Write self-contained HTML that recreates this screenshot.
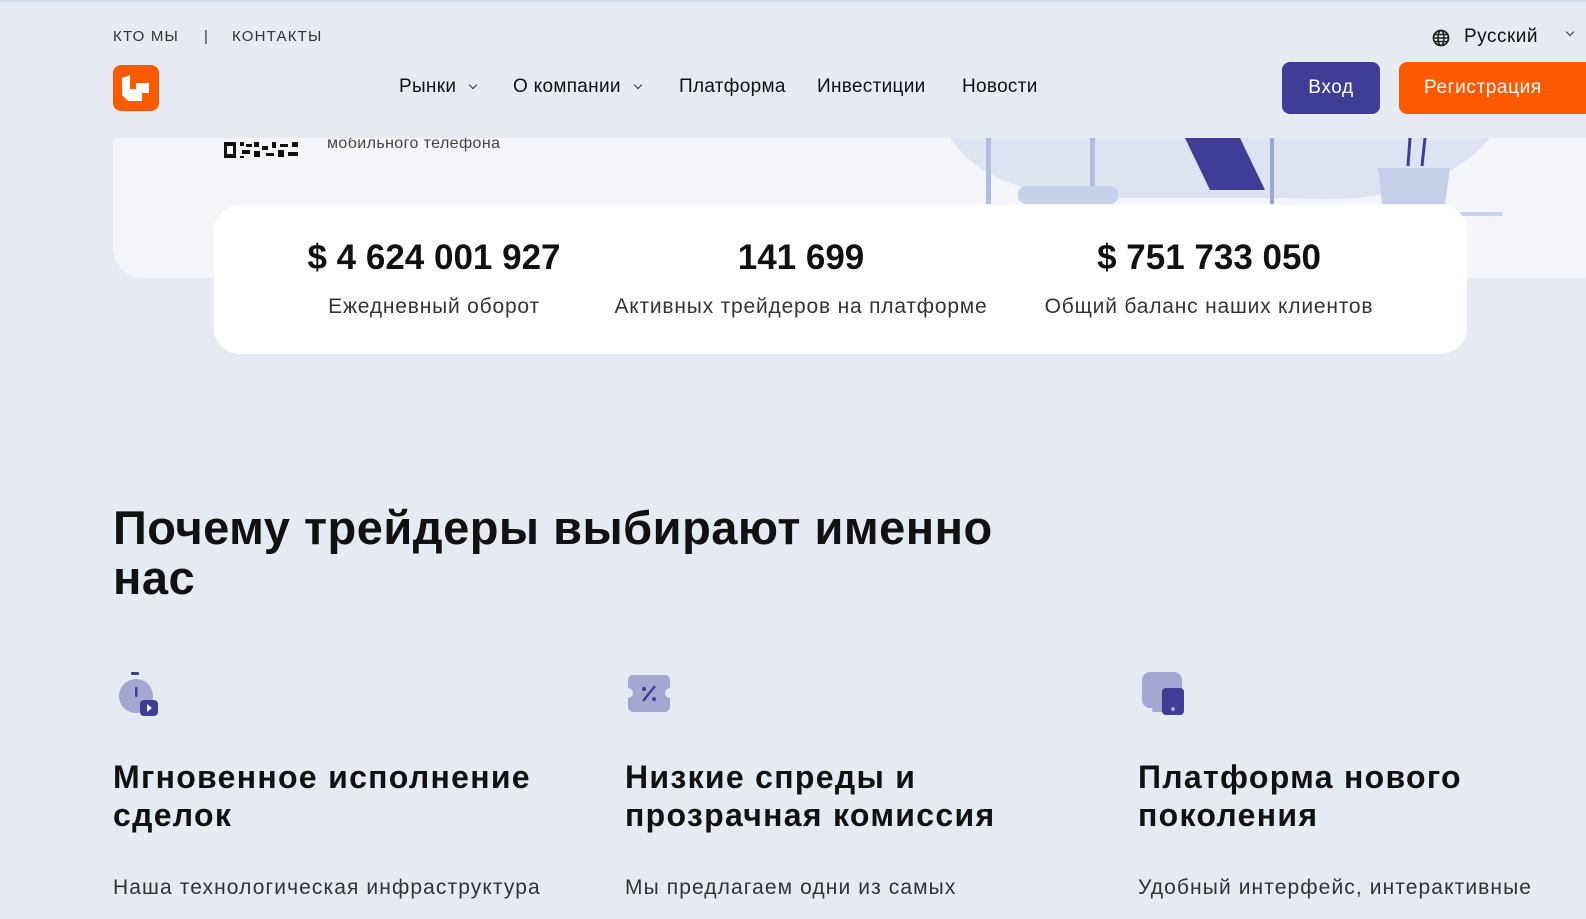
<!DOCTYPE html>
<html><head><meta charset="utf-8"><style>
*{margin:0;padding:0;box-sizing:border-box}
body{width:1586px;height:919px;overflow:hidden;background:#e5eaf3;font-family:"Liberation Sans",sans-serif;color:#111;position:relative}
.abs{position:absolute}
.hero{left:113px;top:60px;width:1500px;height:218px;background:#f3f5fa;border-radius:0 0 30px 30px}
.hdr{left:0;top:0;width:1586px;height:138px;background:#e5eaf3;border-top:2px solid #d6deec}
.top{top:28px;font-size:15px;letter-spacing:1.2px;color:#333}
.nav{top:76px;font-size:19px;color:#111;letter-spacing:0.3px}
.chev{display:inline-block;width:6px;height:6px;border-right:1.5px solid #333;border-bottom:1.5px solid #333;transform:rotate(45deg);margin-left:14px;position:relative;top:-4px}
.btn{top:62px;height:52px;border-radius:8px;color:#fff;font-size:19px;display:flex;align-items:center;justify-content:center;letter-spacing:0.6px}
.stats{left:214px;top:205px;width:1253px;height:149px;background:#fff;border-radius:26px}
.num{top:238px;font-size:35px;font-weight:bold;text-align:center}
.lab{top:295px;font-size:21px;color:#333;text-align:center;letter-spacing:0.8px}
h1{position:absolute;left:113px;top:503px;font-size:47px;line-height:50px;font-weight:bold;color:#111;letter-spacing:0.5px}
h3{position:absolute;top:758px;font-size:32px;line-height:38px;font-weight:bold;color:#111;letter-spacing:1.3px}
.p{top:876px;font-size:21px;color:#333;letter-spacing:1.1px}
</style></head><body>
<div class="abs hero"></div>
<svg class="abs" style="left:930px;top:138px" width="600" height="80">
<path d="M20 0 Q60 60 180 60 L360 60 Q500 70 560 0Z" fill="#dde3f1"/>
<rect x="56" y="0" width="5" height="66" fill="#b3bde0"/>
<rect x="160" y="0" width="5" height="66" fill="#b3bde0"/>
<rect x="88" y="48" width="100" height="18" rx="8" fill="#c7d2ea"/>
<path d="M255 0 L280 52 L335 52 L310 0Z" fill="#3f3d95"/>
<rect x="340" y="0" width="4" height="66" fill="#9ea8cc"/>
<path d="M448 30 L520 30 L515 66 L452 66Z" fill="#c6cfea"/>
<path d="M480 0 L478 28 M495 0 L492 28" stroke="#3f3d95" stroke-width="3"/>
<rect x="530" y="74" width="42" height="4" fill="#c7d2ea"/>
</svg>
<svg class="abs" style="left:222px;top:136px" width="80" height="24">
<rect x="0" y="0" width="80" height="24" fill="#f3f5fa"/>
<rect x="2" y="6" width="12" height="16" fill="#111"/><rect x="5" y="10" width="6" height="8" fill="#fff"/>
<path d="M18 6h4v4h-4zM24 8h6v3h-6zM32 6h5v5h-5zM40 10h6v4h-6zM50 6h4v6h-4zM58 8h8v3h-8zM70 6h6v5h-6zM20 14h8v4h-8zM32 15h6v6h-6zM44 17h8v3h-8zM56 14h6v7h-6zM66 16h10v4h-10zM18 20h4v2h-4z" fill="#111"/>
</svg>
<div class="abs" style="left:327px;top:135px;font-size:16px;color:#444;letter-spacing:0.4px">мобильного телефона</div>
<div class="abs hdr"></div>
<div class="abs top" style="left:113px">КТО МЫ</div>
<div class="abs top" style="left:204px">|</div>
<div class="abs top" style="left:232px">КОНТАКТЫ</div>
<svg class="abs" style="left:1432px;top:29px" width="18" height="18" viewBox="0 0 18 18"><circle cx="9" cy="9" r="7.5" fill="none" stroke="#222" stroke-width="1.8"/><ellipse cx="9" cy="9" rx="3" ry="7.5" fill="none" stroke="#222" stroke-width="1.6"/><path d="M2 9h14M3 5.5h12M3 12.5h12" stroke="#222" stroke-width="1.5"/></svg>
<div class="abs" style="left:1464px;top:26px;font-size:19px;color:#111;letter-spacing:0.5px">Русский</div>
<div class="abs" style="left:1553px;top:26px"><span class="chev"></span></div>
<svg class="abs" style="left:113px;top:65px" width="46" height="46" viewBox="0 0 46 46"><rect width="46" height="46" rx="8" fill="#ff5a00"/><path d="M9 13 L17 10 L17 24 L23 24 L23 18 L36 18 L36 28 L29 28 L29 36 L15 36 L9 30Z" fill="#fff"/></svg>
<div class="abs nav" style="left:399px">Рынки<span class="chev"></span></div>
<div class="abs nav" style="left:513px">О компании<span class="chev"></span></div>
<div class="abs nav" style="left:679px">Платформа</div>
<div class="abs nav" style="left:817px">Инвестиции</div>
<div class="abs nav" style="left:962px">Новости</div>
<div class="abs btn" style="left:1282px;width:98px;background:#3f3d95">Вход</div>
<div class="abs btn" style="left:1399px;width:200px;background:#ff5a00;justify-content:flex-start;padding-left:25px">Регистрация</div>

<div class="abs stats"></div>
<div class="abs num" style="left:284px;width:300px">$ 4 624 001 927</div>
<div class="abs num" style="left:651px;width:300px">141 699</div>
<div class="abs num" style="left:1059px;width:300px">$ 751 733 050</div>
<div class="abs lab" style="left:284px;width:300px">Ежедневный оборот</div>
<div class="abs lab" style="left:601px;width:400px">Активных трейдеров на платформе</div>
<div class="abs lab" style="left:1009px;width:400px">Общий баланс наших клиентов</div>

<h1>Почему трейдеры выбирают именно<br>нас</h1>

<svg class="abs" style="left:118px;top:672px" width="42" height="44" viewBox="0 0 42 44"><rect x="13" y="0" width="8" height="3" rx="1" fill="#3f3d95"/><circle cx="18" cy="24" r="17" fill="#a5a7d2"/><rect x="17" y="15" width="2.5" height="10" rx="1" fill="#3f3d95"/><rect x="22" y="28" width="18" height="16" rx="4" fill="#3f3d95"/><path d="M29 32 L34 36 L29 40Z" fill="#fff"/></svg>
<svg class="abs" style="left:627px;top:675px" width="44" height="38" viewBox="0 0 44 38"><path d="M6 0h32a5 5 0 0 1 5 5v8a4 4 0 0 0 0 10v9a5 5 0 0 1-5 5H6a5 5 0 0 1-5-5v-9a4 4 0 0 0 0-10V5a5 5 0 0 1 5-5z" fill="#a5a7d2"/><path d="M16 26 L28 11" stroke="#3f3d95" stroke-width="2.5"/><circle cx="17" cy="14" r="2" fill="#3f3d95"/><circle cx="27" cy="24" r="2" fill="#3f3d95"/></svg>
<svg class="abs" style="left:1140px;top:672px" width="46" height="44" viewBox="0 0 46 44"><rect x="2" y="0" width="40" height="36" rx="8" fill="#a5a7d2"/><rect x="12" y="36" width="14" height="4" rx="2" fill="#a5a7d2"/><rect x="22" y="16" width="22" height="27" rx="4" fill="#3f3d95"/><circle cx="33" cy="37" r="2" fill="#a5a7d2"/></svg>

<h3 style="left:113px">Мгновенное исполнение<br>сделок</h3>
<h3 style="left:625px">Низкие спреды и<br>прозрачная комиссия</h3>
<h3 style="left:1138px">Платформа нового<br>поколения</h3>
<div class="abs p" style="left:113px">Наша технологическая инфраструктура</div>
<div class="abs p" style="left:625px">Мы предлагаем одни из самых</div>
<div class="abs p" style="left:1138px">Удобный интерфейс, интерактивные</div>
</body></html>
